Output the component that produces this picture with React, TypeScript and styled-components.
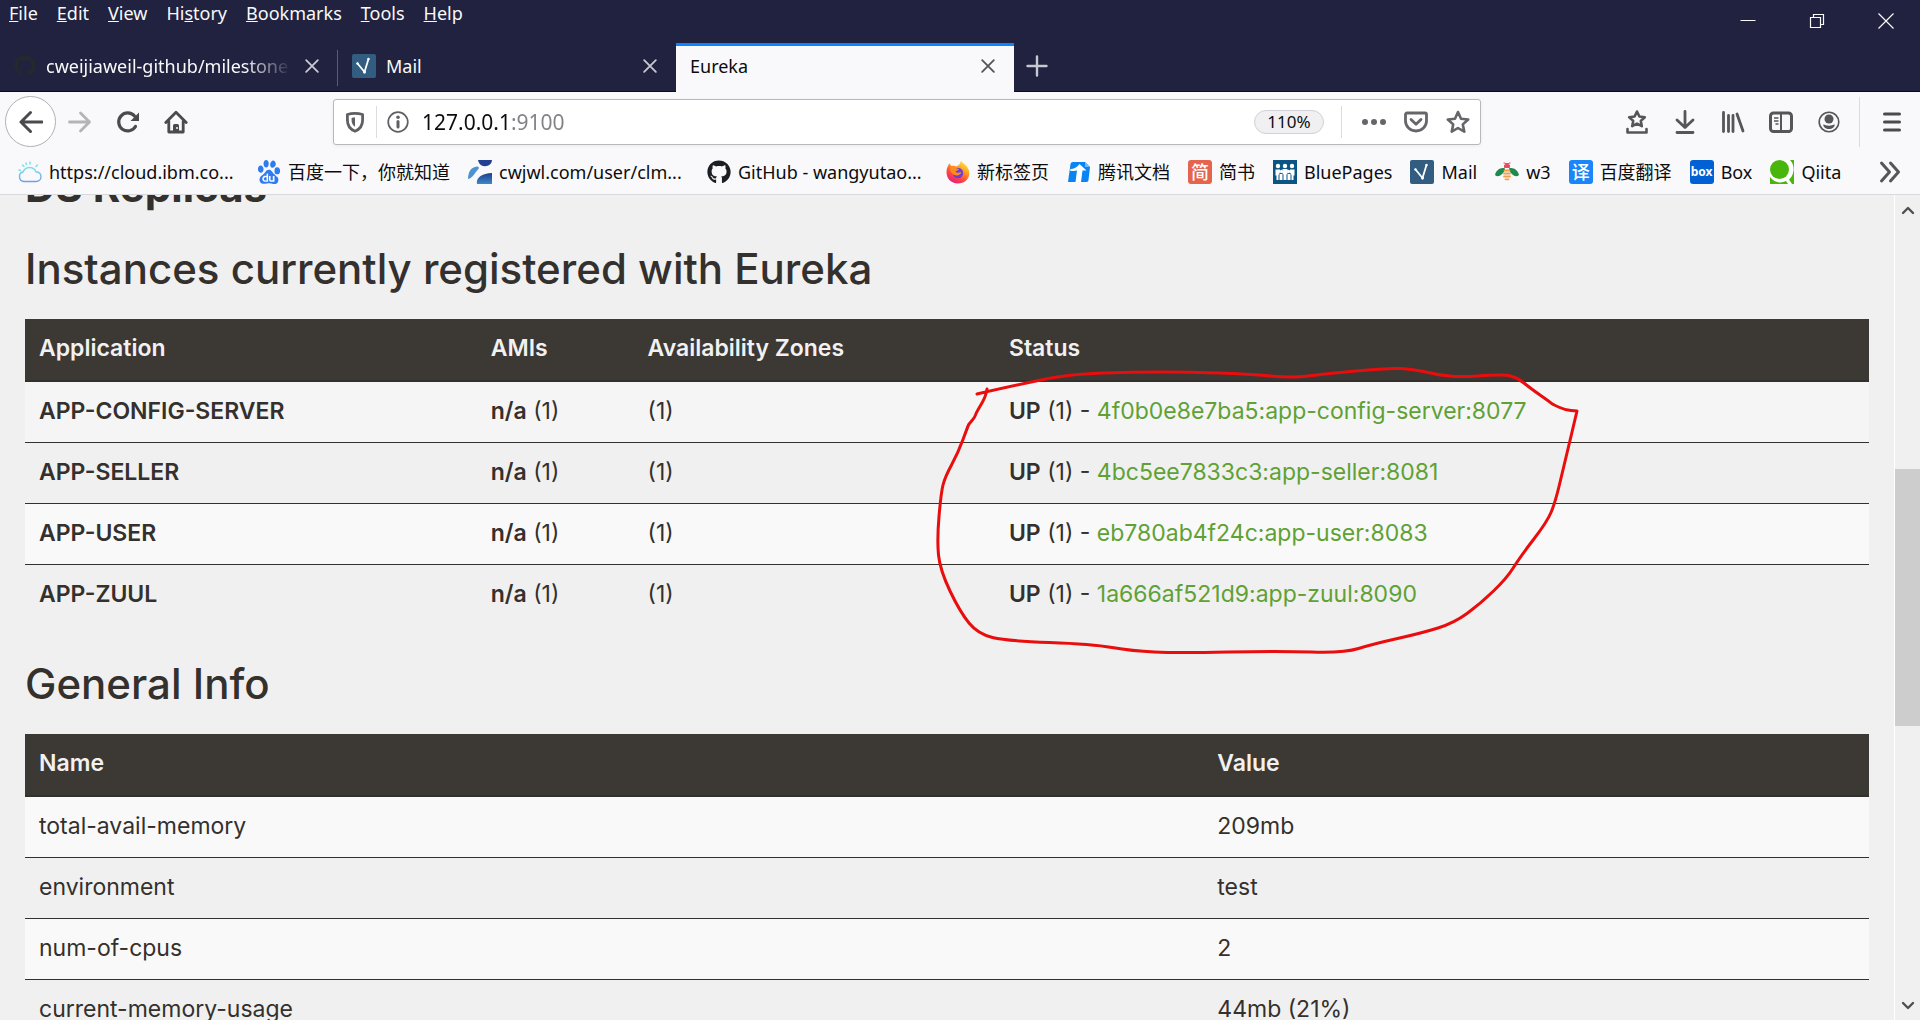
import React from 'react';
import styled, { createGlobalStyle, css } from 'styled-components';
import { FaGithub } from 'react-icons/fa6';
import { SiBaidu } from 'react-icons/si';

const chromeFont = '"Noto Sans", "Noto Sans CJK SC", sans-serif';
const pageFont = 'Inter, "Noto Sans", sans-serif';

const GlobalStyle = createGlobalStyle`
  *, *::before, *::after { box-sizing: border-box; }
  html, body { margin: 0; padding: 0; }
  body { font-family: ${chromeFont}; overflow: hidden; }
  button { font: inherit; color: inherit; border: 0; padding: 0; background: none; cursor: pointer; }
  a { text-decoration: none; color: inherit; }
  svg { display: block; }
`;

const Browser = styled.div`
  display: flex;
  flex-direction: column;
  height: 100vh;
  min-width: 0;
  background: #f9f9fb;
`;

/* ---------- title bar ---------- */

const TitleBar = styled.header`
  display: flex;
  justify-content: space-between;
  align-items: flex-start;
  height: 43px;
  background: #20223f;
  color: #f9f9fa;
`;

const MenuBar = styled.nav`
  display: flex;
  gap: 19px;
  padding: 1px 9px;
`;

const MenuButton = styled.button`
  font-size: 18px;
  line-height: 24px;
`;

const WindowControls = styled.div`
  display: flex;
`;

const WindowButton = styled.button`
  display: flex;
  align-items: center;
  justify-content: center;
  width: 69px;
  height: 42px;
`;

/* ---------- tabs ---------- */

const TabStrip = styled.div`
  display: flex;
  height: 49px;
  background: #20223f;
  color: #f9f9fa;
  border-bottom: 1px solid #0c0c1c;
`;

const Tab = styled.div<{ $active?: boolean; $divider?: boolean }>`
  display: flex;
  align-items: center;
  gap: 10px;
  position: relative;
  width: 338px;
  height: 48px;
  padding: 0 16px 2px 14px;
  ${p =>
    p.$active &&
    css`
      height: 49px;
      background: #f9f9fb;
      color: #0c0c0d;
      border-top: 3px solid #0a84ff;
      padding-bottom: 6px;
    `}
  ${p =>
    p.$divider &&
    css`
      &::after {
        content: '';
        position: absolute;
        right: 0;
        top: 7px;
        width: 1px;
        height: 36px;
        background: #5b5c74;
      }
    `}
`;

const TabTitle = styled.button<{ $fade?: boolean }>`
  flex: 1;
  min-width: 0;
  overflow: hidden;
  white-space: nowrap;
  text-align: left;
  font-size: 18px;
  line-height: 26px;
  ${p =>
    p.$fade &&
    css`
      mask-image: linear-gradient(to left, transparent, #000 48px);
    `}
`;

const IconButton = styled.button<{ $size?: number; $tone?: string }>`
  display: flex;
  align-items: center;
  justify-content: center;
  flex: none;
  width: ${p => p.$size ?? 24}px;
  height: ${p => p.$size ?? 24}px;
  color: ${p => p.$tone ?? '#55555a'};
`;

const NewTab = styled.div`
  display: flex;
  align-items: center;
  padding: 0 11px 2px;
`;

/* ---------- navigation bar ---------- */

const NavBar = styled.div`
  display: flex;
  align-items: center;
  height: 59px;
  padding: 0 14px 0 5px;
`;

const NavLeft = styled.div`
  display: flex;
  align-items: center;
  gap: 24px;
  width: 328px;
`;

const BackButton = styled.button`
  display: flex;
  align-items: center;
  justify-content: center;
  width: 51px;
  height: 51px;
  margin-right: -12px;
  border: 1px solid #b1b1b5;
  border-radius: 50%;
  background: #fff;
  color: #4a4a4f;
`;

const UrlBar = styled.div`
  display: flex;
  align-items: center;
  flex: 1;
  height: 46px;
  padding: 0 10px 0 9px;
  background: #fff;
  border: 1px solid #b8b8bc;
  border-radius: 3px;
  box-shadow: 0 1px 4px rgba(0, 0, 0, 0.06);
`;

const BarDivider = styled.span<{ $tall?: boolean }>`
  flex: none;
  width: 1px;
  height: ${p => (p.$tall ? 50 : 32)}px;
  margin: 0 ${p => (p.$tall ? 18 : 9)}px;
  background: #dcdce0;
`;

const UrlInput = styled.input`
  flex: 1;
  min-width: 0;
  margin-left: 12px;
  padding: 0;
  border: 0;
  outline: 0;
  font-family: ${chromeFont};
  font-size: 21px;
  line-height: 32px;
  color: transparent;
  caret-color: #0c0c0d;
  background: linear-gradient(to right, #0c0c0d 88px, #808085 88px);
  background-clip: text;
  -webkit-background-clip: text;
`;

const ZoomButton = styled.button`
  width: 70px;
  height: 24px;
  margin-right: 8px;
  border: 1px solid #d2d2d6;
  border-radius: 12px;
  background: #f0f0f2;
  color: #0c0c0d;
  font-size: 17px;
  line-height: 20px;
`;

const UrlActions = styled.div`
  display: flex;
  gap: 18px;
  margin-left: 11px;
`;

const NavRight = styled.div`
  display: flex;
  align-items: center;
  justify-content: flex-end;
  width: 425px;
`;

const ToolGroup = styled.div`
  display: flex;
  gap: 24px;
`;

/* ---------- bookmarks ---------- */

const BookmarksBar = styled.nav`
  display: flex;
  align-items: center;
  gap: 18px;
  height: 44px;
  padding: 0 18px 1px;
  border-bottom: 1px solid #d9d9dc;
  color: #0c0c0d;
`;

const Bookmark = styled.a`
  display: flex;
  align-items: center;
  gap: 7px;
  flex: none;
  font-size: 18px;
  line-height: 26px;
  white-space: nowrap;
`;

const BookmarkLabel = styled.span<{ $width?: number }>`
  width: ${p => (p.$width ? `${p.$width}px` : 'auto')};
`;

const Tile = styled.span<{ $bg: string; $small?: boolean }>`
  display: flex;
  align-items: center;
  justify-content: center;
  width: 24px;
  height: 24px;
  border-radius: 3px;
  background: ${p => p.$bg};
  color: #fff;
  font-size: ${p => (p.$small ? 12 : 18)}px;
  font-weight: ${p => (p.$small ? 700 : 500)};
  line-height: 24px;
`;

const OverflowButton = styled(IconButton)`
  margin-left: auto;
`;

/* ---------- page ---------- */

const Viewport = styled.div`
  display: flex;
  flex: 1;
  min-height: 0;
  overflow: hidden;
  position: relative;
  background: #f0f0f0;
`;

const Page = styled.main`
  flex: 1;
  min-width: 0;
  margin-top: -31px;
  padding: 0 25px;
  font-family: ${pageFont};
  color: #34302d;
`;

const Heading = styled.h1<{ $strong?: boolean }>`
  margin: 0 0 27px;
  font-size: 42px;
  font-weight: ${p => (p.$strong ? 700 : 500)};
  line-height: 46px;
  table + & { margin-top: 36px; }
  & + & { margin-top: 36px; }
  ${p => p.$strong && css`margin-bottom: 36px;`}
`;

const DataTable = styled.table`
  width: 100%;
  table-layout: fixed;
  border-spacing: 0;
  font-size: 23px;
  line-height: 31px;
`;

const Col = styled.col<{ $share: string }>`
  width: ${p => p.$share};
`;

const HeadCell = styled.th`
  padding: 14px 14px 16px;
  text-align: left;
  font-weight: 600;
  color: #f1f1f1;
  background: #3c3834;
  border-bottom: 2px solid #34302d;
`;

const Cell = styled.td`
  padding: 14px 14px 15px;
`;

const Row = styled.tr<{ $hovered?: boolean }>`
  &:nth-child(odd) { background: #f9f9f9; }
  &:not(:first-child) ${Cell} { border-top: 1px solid #34302d; }
  ${p => p.$hovered && css`&&:nth-child(odd) { background: #f5f5f5; }`}
`;

const Strong = styled.b`
  font-weight: 600;
`;

const InstanceLink = styled.a`
  color: #5fa134;
`;

const Marker = styled.svg`
  position: absolute;
  left: 920px;
  top: 165px;
  pointer-events: none;
`;

const ScrollBar = styled.div`
  display: grid;
  grid-template-rows: 31px 243fr 257fr 263fr 31px;
  width: 26px;
  border-left: 1px solid #fff;
  background: #f0f0f0;
  color: #505050;
`;

const ScrollArrow = styled.button<{ $end?: boolean }>`
  display: flex;
  align-items: center;
  justify-content: center;
  grid-row: ${p => (p.$end ? 5 : 1)};
`;

const ScrollThumb = styled.div`
  grid-row: 3;
  background: #cdcdcd;
`;

/* ---------- icons ---------- */

const Stroke = ({ d, size = 24, box = 24, w = 3 }: { d: string; size?: number; box?: number; w?: number }) => (
  <svg width={size} height={size} viewBox={`0 0 ${box} ${box}`} fill="none" stroke="currentColor" strokeWidth={w} strokeLinecap="round" strokeLinejoin="round">
    <path d={d} />
  </svg>
);

const CloseIcon = () => <Stroke d="M5 5l14 14M19 5l-14 14" w={2.2} />;

const ShieldIcon = () => (
  <svg width="24" height="24" viewBox="0 0 24 24" fill="none" stroke="#606064" strokeWidth="2.8" strokeLinejoin="round">
    <path d="M12 3.4c3 0 5.6.5 7.6 1.1V10c0 6-3.400 9.600-7.600 11.200C7.800 19.600 4.400 16 4.400 10V4.500C6.400 3.900 9 3.400 12 3.400z" />
    <path d="M12 7.500v9.200C9.700 15.300 8.600 13 8.600 10.200V7.900c1-.300 2.200-.400 3.400-.4z" fill="#606064" stroke="none" />
  </svg>
);

const InfoIcon = () => (
  <svg width="24" height="24" viewBox="0 0 24 24" fill="none" stroke="#606064">
    <circle cx="12" cy="12" r="9.800" strokeWidth="1.700" />
    <circle cx="12" cy="7.200" r="1.800" fill="#606064" stroke="none" />
    <path d="M12 11.500v5.500" strokeWidth="3" strokeLinecap="round" />
  </svg>
);

const ReloadIcon = () => (
  <svg width="24" height="24" viewBox="0 0 24 24" fill="none" stroke="currentColor" strokeWidth="3.200" strokeLinecap="round">
    <path d="M19.500 16.500A9 9 0 1 1 18.500 6" />
    <path d="M23 2.500v8.500h-8.500z" fill="currentColor" stroke="none" />
  </svg>
);

const HomeIcon = () => (
  <svg width="24" height="24" viewBox="0 0 24 24" fill="none" stroke="currentColor" strokeWidth="2.800" strokeLinecap="round" strokeLinejoin="round">
    <path d="M1.800 12.500L12 2.200l10.200 10.300M4.800 11v11h14.400V11" />
    <path d="M9 22v-6.500a1.500 1.500 0 0 1 1.500-1.500h3a1.500 1.500 0 0 1 1.500 1.500V22z" fill="currentColor" stroke="none" />
    <circle cx="13" cy="18" r="1" fill="#f9f9fb" stroke="none" />
  </svg>
);

const DotsIcon = () => (
  <svg width="24" height="24" viewBox="0 0 24 24" fill="#66666a">
    <circle cx="3" cy="12" r="3" /><circle cx="12" cy="12" r="3" /><circle cx="21" cy="12" r="3" />
  </svg>
);

const StarTrayIcon = () => (
  <svg width="24" height="26" viewBox="0 0 24 26" fill="none" stroke="currentColor" strokeWidth="2.600" strokeLinejoin="round" strokeLinecap="round">
    <path d="M12 2.500l2.400 5 5.400.7-4 3.700 1 5.300L12 14.600l-4.800 2.600 1-5.300-4-3.700 5.400-.7z" />
    <path d="M2.500 20v3.500h19V20" />
  </svg>
);

const LibraryIcon = () => <Stroke d="M2.500 2.500v19M7.500 5.500v16M12 5.500v16M16 4l6 17" w={2.8} />;

const SidebarIcon = () => (
  <svg width="24" height="24" viewBox="0 0 24 24" fill="none" stroke="currentColor">
    <rect x="1.500" y="3" width="21" height="18.500" rx="3" strokeWidth="3" />
    <path d="M12 4v17" strokeWidth="2" />
    <path d="M5 8h4.500M5 11h4.500M6.500 14h3" strokeWidth="1.500" />
  </svg>
);

const AccountIcon = () => (
  <svg width="24" height="24" viewBox="0 0 24 24" fill="none" stroke="currentColor">
    <circle cx="12" cy="12" r="9.800" strokeWidth="1.600" />
    <circle cx="12" cy="9" r="4.500" fill="currentColor" stroke="none" />
    <path d="M6.200 14.500c1.500.2 3.500 1.200 5.800 1.200s4.300-1 5.800-1.200c0 2.700-2.600 4.500-5.800 4.500s-5.800-1.800-5.800-4.500z" fill="currentColor" stroke="none" />
  </svg>
);

const CloudIcon = () => (
  <svg width="24" height="24" viewBox="0 0 24 24" fill="none" strokeLinecap="round">
    <defs>
      <linearGradient id="cloud" x1="0" y1="0" x2="0" y2="1">
        <stop offset="0" stopColor="#7fdfe8" /><stop offset="1" stopColor="#6f9df0" />
      </linearGradient>
    </defs>
    <path d="M6 21.500a5 5 0 0 1-.8-9.800 7 7 0 0 1 12.800 0c3 .3 5 2.300 5 5s-2 4.800-5 4.800z" stroke="url(#cloud)" strokeWidth="1.400" />
    <path d="M6 6.500L4.500 5M12 4V2M18 6.500L19.500 5M2.500 10.500L1 10M8.500 4.500L8 3" stroke="#7fdfe8" strokeWidth="1.500" />
  </svg>
);

const SwooshIcon = () => (
  <svg width="24" height="24" viewBox="0 0 24 24">
    <defs>
      <linearGradient id="swoosh" x1="0" y1="0" x2="0" y2="1">
        <stop offset="0" stopColor="#1d3f8f" /><stop offset="1" stopColor="#3f88c8" />
      </linearGradient>
    </defs>
    <path d="M10 0h14c-.5 4-3 6-7 6.200C13 6.300 11 4 10 0z" fill="#223f92" />
    <path d="M0 19C0 12 3 7 9 6.500c2 0 2.500 1.500 1 3C7 12.500 5 18 0 19z" fill="#4d93cf" />
    <path d="M9 24c-1.500-6 5-11 15-11v11z" fill="url(#swoosh)" />
  </svg>
);

const FirefoxIcon = () => (
  <svg width="24" height="24" viewBox="0 0 24 24">
    <defs>
      <linearGradient id="fx" x1="0.800" y1="0" x2="0.200" y2="1">
        <stop offset="0" stopColor="#fff04a" /><stop offset="0.350" stopColor="#ffa021" />
        <stop offset="0.650" stopColor="#ff4a3f" /><stop offset="1" stopColor="#e31587" />
      </linearGradient>
    </defs>
    <path d="M15 .5c1 3 6 4 7.800 9.500C25 18 19 23.500 12 23.500S.5 18.500.5 12C.5 8 2 5 4 3c0 1.500.5 2.500 1.500 3C8 5.500 9 6 10 6.500 12 6 14.500 4 15 .5z" fill="url(#fx)" />
    <circle cx="12" cy="13" r="5.200" fill="#6b3fd6" />
    <path d="M4 7c2-1 5-.5 6.500 1.200L13 9c-.5 1.500-3 1.500-3.500 3 1.500 1.500 4 .5 6 0-1 3-4 4-7 3-3-1.200-5-5-4.500-8z" fill="#ff8b1f" />
  </svg>
);

const DocsIcon = () => (
  <svg width="24" height="24" viewBox="0 0 24 24">
    <path d="M6 2h12l5 5-1.500 13a2 2 0 0 1-2 2H1L3.500 4a2.500 2.500 0 0 1 2.500-2z" fill="#0a84f5" />
    <path d="M18 2l5 5h-5z" fill="#69bbff" />
    <path d="M3.500 9C7 9 10 7.500 12.500 4l7 6.500h-4L14 22H8.500L10 10.500C8 11 6 11 3.200 11z" fill="#fff" />
  </svg>
);

const PeopleIcon = () => (
  <svg width="24" height="24" viewBox="0 0 24 24">
    <rect width="24" height="24" fill="#0b5584" />
    <g fill="#fff">
      <circle cx="5" cy="6" r="2.200" /><circle cx="12" cy="6" r="2.200" /><circle cx="19" cy="6" r="2.200" />
      <path d="M2.500 9.500h4.500v3L5.500 15v5H3.500v-4.500h-1zM21.500 9.500H17v3l1.500 2.500v5h2v-4.500h1z" />
      <circle cx="8.500" cy="11.500" r="1.700" /><circle cx="15.500" cy="11.500" r="1.700" />
      <path d="M9.500 9h5v4.500l-1 1V20h-3v-5.500l-1-1zM6.500 14h3v6h-3zM14.500 14h3v6h-3z" />
    </g>
  </svg>
);

const VerseIcon = () => (
  <svg width="24" height="24" viewBox="0 0 24 24" fill="none" stroke="#fff" strokeWidth="1.800" strokeLinecap="round">
    <rect width="24" height="24" rx="2" fill="#325c80" stroke="none" />
    <path d="M5.500 9.500L12.500 18l4-13" />
    <circle cx="12.500" cy="18" r="1.500" fill="#fff" stroke="none" />
    <circle cx="5.500" cy="9.500" r="1.200" fill="#fff" stroke="none" />
    <circle cx="16.500" cy="5" r="1.200" fill="#fff" stroke="none" />
  </svg>
);

const BeeIcon = () => (
  <svg width="24" height="24" viewBox="0 0 24 24">
    <path d="M10 8.500C6 7 1 10 0 15c3 3 8 0 10-5.500zM14 8.500c4-1.500 9 1.500 10 6.500-3 3-8 0-10-5.500z" fill="#1f8a4c" />
    <path d="M8.500 3h1.500l1 2h2l1-2h1.500M9.500 5h5v2.500h-5z" fill="#ee4b5e" stroke="#ee4b5e" strokeWidth="1" />
    <path d="M9.500 10.500h5M9 13.500h6M9 16.500h6M10.500 19.300h3" stroke="#f0a04b" strokeWidth="1.800" strokeLinecap="round" />
  </svg>
);

const QiitaIcon = () => (
  <svg width="24" height="24" viewBox="0 0 24 24">
    <rect width="24" height="24" fill="#49b60d" />
    <path d="M0 0h20c3 3 4 7 3.500 11S21 18 19 19.500l3 4.500h-4l-2-3C10 24 4 22 0 17z" fill="#fff" />
    <ellipse cx="9.500" cy="9.500" rx="9.500" ry="9.500" fill="#49b60d" />
  </svg>
);

/* ---------- data ---------- */

const menus: [string, number][] = [
  ['File', 0], ['Edit', 0], ['View', 0], ['History', 2], ['Bookmarks', 0], ['Tools', 0], ['Help', 0],
];

const bookmarks: { label: string; icon: React.ReactNode; width?: number }[] = [
  { label: 'https://cloud.ibm.co...', icon: <CloudIcon />, width: 190 },
  { label: '百度一下，你就知道', icon: <SiBaidu size={24} color="#2f7cf0" /> },
  { label: 'cwjwl.com/user/clm...', icon: <SwooshIcon />, width: 190 },
  { label: 'GitHub - wangyutao...', icon: <FaGithub size={24} color="#1b1f23" />, width: 190 },
  { label: '新标签页', icon: <FirefoxIcon /> },
  { label: '腾讯文档', icon: <DocsIcon /> },
  { label: '简书', icon: <Tile $bg="#e4644d">简</Tile> },
  { label: 'BluePages', icon: <PeopleIcon /> },
  { label: 'Mail', icon: <VerseIcon /> },
  { label: 'w3', icon: <BeeIcon /> },
  { label: '百度翻译', icon: <Tile $bg="#1b86f9">译</Tile> },
  { label: 'Box', icon: <Tile $bg="#0061d5" $small>box</Tile> },
  { label: 'Qiita', icon: <QiitaIcon /> },
];

const instances = [
  { app: 'APP-CONFIG-SERVER', id: '4f0b0e8e7ba5:app-config-server:8077' },
  { app: 'APP-SELLER', id: '4bc5ee7833c3:app-seller:8081' },
  { app: 'APP-USER', id: 'eb780ab4f24c:app-user:8083' },
  { app: 'APP-ZUUL', id: '1a666af521d9:app-zuul:8090' },
];

const info = [
  ['total-avail-memory', '209mb'],
  ['environment', 'test'],
  ['num-of-cpus', '2'],
  ['current-memory-usage', '44mb (21%)'],
];

const markerPoints = [
  [977, 394], [1034, 381], [1074, 374], [1132, 372], [1190, 372], [1248, 374], [1293, 378], [1324, 374], [1387, 368],
  [1413, 369], [1453, 378], [1503, 374], [1518, 378], [1530, 388], [1550, 402], [1552, 404], [1565, 410], [1577, 411], [1577, 411],
  [1563, 470], [1555, 503], [1547, 522], [1520, 557], [1507, 578], [1480, 604], [1454, 623], [1422, 633], [1373, 644],
  [1344, 653], [1279, 651], [1177, 653], [1132, 651], [1092, 644], [1007, 641], [978, 634], [960, 612], [940, 570],
  [937, 540], [941, 493], [945, 477], [958, 453], [968, 426], [969, 424], [975, 417], [976, 413], [985, 398], [987, 389],
];

/* Runs a smooth curve through the midpoints of neighbouring points. */
const smooth = (pts: number[][]) => {
  let d = `M${pts[0][0]} ${pts[0][1]}`;
  for (let i = 1; i < pts.length - 1; i++) {
    const [x, y] = pts[i];
    const [nx, ny] = pts[i + 1];
    d += `Q${x} ${y} ${(x + nx) / 2} ${(y + ny) / 2}`;
  }
  const last = pts[pts.length - 1];
  return `${d}L${last[0]} ${last[1]}`;
};

export default function App() {
  return (
    <Browser>
      <GlobalStyle />
      <TitleBar>
        <MenuBar aria-label="Menu bar">
          {menus.map(([name, key]) => (
            <MenuButton key={name}>
              {name.slice(0, key)}<u>{name[key]}</u>{name.slice(key + 1)}
            </MenuButton>
          ))}
        </MenuBar>
        <WindowControls>
          <WindowButton aria-label="Minimize">
            <svg width="16" height="16" viewBox="0 0 16 16" stroke="currentColor"><path d="M.5 7.500h15" /></svg>
          </WindowButton>
          <WindowButton aria-label="Restore">
            <svg width="16" height="16" viewBox="0 0 16 16" fill="none" stroke="currentColor" strokeWidth="1.200"><path d="M1.500 4.500h10v10h-10zM4.500 4.500v-3h10v10h-3" /></svg>
          </WindowButton>
          <WindowButton aria-label="Close window">
            <svg width="16" height="16" viewBox="0 0 16 16" stroke="currentColor" strokeWidth="1.200"><path d="M.5.5l15 15M15.500.5l-15 15" /></svg>
          </WindowButton>
        </WindowControls>
      </TitleBar>

      <TabStrip>
        <Tab $divider>
          <FaGithub size={22} color="#24292e" />
          <TabTitle $fade>cweijiaweil-github/milestone</TabTitle>
          <IconButton $size={20} $tone="#c8c8d0" aria-label="Close tab"><CloseIcon /></IconButton>
        </Tab>
        <Tab>
          <VerseIcon />
          <TabTitle>Mail</TabTitle>
          <IconButton $size={20} $tone="#c8c8d0" aria-label="Close tab"><CloseIcon /></IconButton>
        </Tab>
        <Tab $active>
          <TabTitle>Eureka</TabTitle>
          <IconButton $size={20} aria-label="Close tab"><CloseIcon /></IconButton>
        </Tab>
        <NewTab>
          <IconButton $tone="#c8c8d0" aria-label="New tab"><Stroke d="M12 2.500v19M2.500 12h19" w={2.4} /></IconButton>
        </NewTab>
      </TabStrip>

      <NavBar>
        <NavLeft>
          <BackButton aria-label="Back"><Stroke d="M23 12H2M11.500 2.500L2 12l9.500 9.500" w={3} /></BackButton>
          <IconButton $tone="#b4b4b8" aria-label="Forward"><Stroke d="M1.500 12h20M12.500 3l9 9-9 9" w={2.8} /></IconButton>
          <IconButton $tone="#4a4a4f" aria-label="Reload"><ReloadIcon /></IconButton>
          <IconButton $tone="#4a4a4f" aria-label="Home"><HomeIcon /></IconButton>
        </NavLeft>
        <UrlBar>
          <IconButton aria-label="Tracking protection"><ShieldIcon /></IconButton>
          <BarDivider />
          <IconButton aria-label="Site information"><InfoIcon /></IconButton>
          <UrlInput aria-label="Address" defaultValue="127.0.0.1:9100" />
          <ZoomButton>110%</ZoomButton>
          <BarDivider />
          <UrlActions>
            <IconButton aria-label="Page actions"><DotsIcon /></IconButton>
            <IconButton $tone="#66666a" aria-label="Save to Pocket">
              <Stroke d="M3 3h18a1.500 1.500 0 0 1 1.500 1.500V11a10.500 10 0 0 1-21 0V4.500A1.500 1.500 0 0 1 3 3zM7 9.500l5 4.800 5-4.800" w={2.8} />
            </IconButton>
            <IconButton $tone="#66666a" aria-label="Bookmark this page">
              <Stroke d="M12 2l3 6.700 7.200.8-5.400 4.900 1.500 7.300L12 18l-6.300 3.700 1.500-7.300L1.800 9.500 9 8.700z" w={2.6} />
            </IconButton>
          </UrlActions>
        </UrlBar>
        <NavRight>
          <ToolGroup>
            <IconButton aria-label="Show bookmarks"><StarTrayIcon /></IconButton>
            <IconButton aria-label="Downloads"><Stroke d="M12 1.500V17M4 10l8 7.500 8-7.500M4 22.500h16" w={2.8} /></IconButton>
            <IconButton aria-label="Library"><LibraryIcon /></IconButton>
            <IconButton aria-label="Sidebars"><SidebarIcon /></IconButton>
            <IconButton aria-label="Account"><AccountIcon /></IconButton>
          </ToolGroup>
          <BarDivider $tall />
          <IconButton $tone="#4a4a4f" aria-label="Open menu" $size={28}><Stroke d="M4.500 4h15M4.500 12h15M4.500 20h15" w={3} /></IconButton>
        </NavRight>
      </NavBar>

      <BookmarksBar aria-label="Bookmarks">
        {bookmarks.map(b => (
          <Bookmark key={b.label} href="#">
            {b.icon}
            <BookmarkLabel $width={b.width}>{b.label}</BookmarkLabel>
          </Bookmark>
        ))}
        <OverflowButton aria-label="More bookmarks"><Stroke d="M3.500 3l8 9-8 9M12.500 3l8 9-8 9" w={3} /></OverflowButton>
      </BookmarksBar>

      <Viewport>
        <Page>
          <Heading $strong>DS Replicas</Heading>
          <Heading>Instances currently registered with Eureka</Heading>
          <DataTable>
            <colgroup>
              <Col $share="24.5%" /><Col $share="8.5%" /><Col $share="19.6%" /><Col $share="47.4%" />
            </colgroup>
            <thead>
              <tr>
                <HeadCell>Application</HeadCell>
                <HeadCell>AMIs</HeadCell>
                <HeadCell>Availability Zones</HeadCell>
                <HeadCell>Status</HeadCell>
              </tr>
            </thead>
            <tbody>
              {instances.map((it, i) => (
                <Row key={it.app} $hovered={i === 0}>
                  <Cell><Strong>{it.app}</Strong></Cell>
                  <Cell><Strong>n/a</Strong> (1)</Cell>
                  <Cell>(1)</Cell>
                  <Cell><Strong>UP</Strong> (1) - <InstanceLink href="#">{it.id}</InstanceLink></Cell>
                </Row>
              ))}
            </tbody>
          </DataTable>
          <Heading>General Info</Heading>
          <DataTable>
            <colgroup>
              <Col $share="63.9%" /><Col $share="36.1%" />
            </colgroup>
            <thead>
              <tr>
                <HeadCell>Name</HeadCell>
                <HeadCell>Value</HeadCell>
              </tr>
            </thead>
            <tbody>
              {info.map(([name, value]) => (
                <Row key={name}>
                  <Cell>{name}</Cell>
                  <Cell>{value}</Cell>
                </Row>
              ))}
            </tbody>
          </DataTable>
        </Page>
        <ScrollBar>
          <ScrollArrow aria-label="Scroll up"><Stroke d="M2 9l5-5 5 5" size={14} box={14} w={2.4} /></ScrollArrow>
          <ScrollThumb />
          <ScrollArrow $end aria-label="Scroll down"><Stroke d="M2 5l5 5 5-5" size={14} box={14} w={2.4} /></ScrollArrow>
        </ScrollBar>
        <Marker width="680" height="310" viewBox="920 360 680 310" fill="none" stroke="#e90d0d" strokeWidth="3" strokeLinecap="round" strokeLinejoin="round" aria-hidden="true">
          <path d={smooth(markerPoints)} />
        </Marker>
      </Viewport>
    </Browser>
  );
}
